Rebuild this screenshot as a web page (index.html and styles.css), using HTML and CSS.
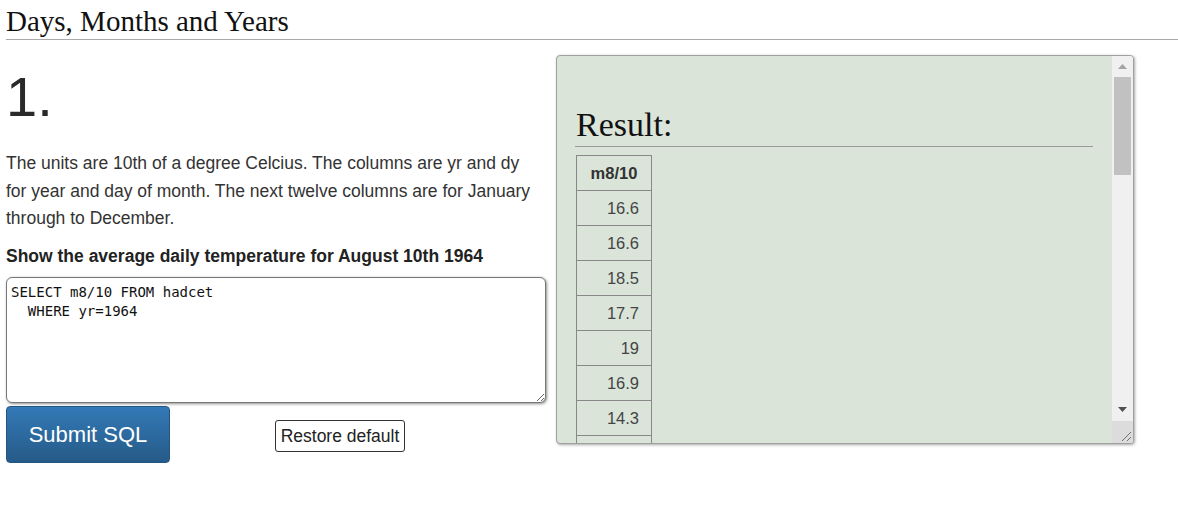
FILE: index.html
```html
<!DOCTYPE html>
<html lang="en">
<head>
<meta charset="utf-8">
<title>Days, Months and Years</title>
<link rel="stylesheet" href="styles.css">
</head>
<body>
<div class="page">
  <h1 class="title">Days, Months and Years</h1>
  <div class="main">
    <div class="question">
      <div class="qnum">1.</div>
      <p class="desc">The units are 10th of a degree Celcius. The columns are yr and dy for year and day of month. The next twelve columns are for January through to December.</p>
      <p class="task">Show the average daily temperature for August 10th 1964</p>
      <textarea class="sql" spellcheck="false">SELECT m8/10 FROM hadcet
  WHERE yr=1964</textarea>
      <div class="actions">
        <button class="btn-submit">Submit SQL</button>
        <button class="btn-restore">Restore default</button>
      </div>
    </div>
    <div class="panel">
      <div class="result-body">
        <h2 class="result-title">Result:</h2>
        <table class="result">
          <thead><tr><th>m8/10</th></tr></thead>
          <tbody>
            <tr><td>16.6</td></tr>
            <tr><td>16.6</td></tr>
            <tr><td>18.5</td></tr>
            <tr><td>17.7</td></tr>
            <tr><td>19</td></tr>
            <tr><td>16.9</td></tr>
            <tr><td>14.3</td></tr>
            <tr><td>&nbsp;</td></tr>
          </tbody>
        </table>
      </div>
      <div class="sb">
        <div class="sb-btn sb-up"><svg width="9" height="5" viewBox="0 0 9 5"><polygon points="0,5 9,5 4.5,0" fill="#a3a3a3"/></svg></div>
        <div class="sb-thumb"></div>
        <div class="sb-track"></div>
        <div class="sb-btn sb-down"><svg width="9" height="5" viewBox="0 0 9 5"><polygon points="0,0 9,0 4.5,5" fill="#505050"/></svg></div>
        <div class="sb-corner"><svg width="12" height="12" viewBox="0 0 12 12"><line x1="11" y1="2" x2="2" y2="11" stroke="#707070" stroke-width="1"/><line x1="11" y1="7" x2="7" y2="11" stroke="#707070" stroke-width="1"/></svg></div>
      </div>
    </div>
  </div>
</div>
</body>
</html>
```

FILE: styles.css
```css
html, body {
  margin: 0;
  padding: 0;
  background: #fff;
}

.page {
  padding: 0 0 0 6px;
}

.title {
  margin: 0;
  padding: 5px 0 2px 0;
  font-family: "Liberation Serif", "Times New Roman", serif;
  font-weight: normal;
  font-size: 29px;
  line-height: 32px;
  color: #111;
  border-bottom: 1px solid #aaa;
}

.main {
  display: flex;
  align-items: flex-start;
  gap: 10px;
}

.question {
  width: 540px;
  font-family: "Liberation Sans", Arial, sans-serif;
  color: #333;
}

.qnum {
  margin-top: 29px;
  font-size: 56px;
  line-height: 56px;
  height: 56px;
  color: #2a2a2a;
}

.desc {
  margin: 25px 0 0 0;
  max-width: 532px;
  font-size: 17.5px;
  line-height: 27.5px;
}

.task {
  margin: 10px 0 0 0;
  font-size: 17.5px;
  line-height: 27.5px;
  font-weight: bold;
  color: #222;
}

.sql {
  display: block;
  box-sizing: border-box;
  width: 540px;
  height: 126px;
  margin: 7px 0 0 0;
  padding: 5px 4px;
  border: 1px solid #777;
  border-radius: 6px;
  box-shadow: 1px 1px 3px rgba(0, 0, 0, 0.45);
  font-family: "DejaVu Sans Mono", "Liberation Mono", monospace;
  font-size: 14px;
  line-height: 19px;
  color: #111;
  background: #fff;
}

.actions {
  display: flex;
  align-items: center;
  margin-top: 3px;
}

.btn-submit {
  box-sizing: border-box;
  width: 164px;
  height: 57px;
  border: 1px solid #245580;
  border-radius: 4px;
  background: linear-gradient(to bottom, #337ab7 0%, #265a88 100%);
  color: #fff;
  font-family: "Liberation Sans", Arial, sans-serif;
  font-size: 22px;
  padding: 0;
}

.btn-restore {
  box-sizing: border-box;
  margin-left: 105px;
  margin-top: 3px;
  width: 130px;
  height: 32px;
  padding: 0;
  border: 1px solid #333;
  border-radius: 3px;
  background: #fff;
  color: #222;
  font-family: "Liberation Sans", Arial, sans-serif;
  font-size: 17.5px;
}

.panel {
  box-sizing: border-box;
  width: 578px;
  height: 389px;
  margin-top: 15px;
  display: flex;
  background: #dae4d9;
  border: 1px solid #a0a0a0;
  border-radius: 4px;
  box-shadow: 1px 1px 3px rgba(0, 0, 0, 0.35);
  overflow: hidden;
}

.result-body {
  flex: 1;
  overflow: hidden;
  padding: 0 19px 0 18px;
}

.result-title {
  margin: 49px 0 0 0;
  padding: 0 0 2px 1px;
  font-family: "Liberation Serif", "Times New Roman", serif;
  font-weight: normal;
  font-size: 34px;
  line-height: 39px;
  color: #111;
  border-bottom: 1px solid #999;
}

.result {
  margin-top: 8px;
  margin-left: 1px;
  border-collapse: collapse;
  font-family: "Liberation Sans", Arial, sans-serif;
  font-size: 16.5px;
  line-height: 18px;
}

.result th,
.result td {
  border: 1px solid #888;
  padding: 8px 12px;
  width: 50px;
}

.result th {
  text-align: center;
  font-weight: bold;
  color: #333;
}

.result td {
  text-align: right;
  color: #444;
}

.sb {
  width: 21px;
  display: flex;
  flex-direction: column;
  background: #f0f0f0;
}

.sb-btn {
  height: 20px;
  display: flex;
  align-items: center;
  justify-content: center;
}

.sb-down {
  align-items: flex-start;
  padding-top: 6px;
  box-sizing: border-box;
}

.sb-thumb {
  height: 98px;
  margin: 1px 2px 0 2px;
  background: #c1c1c1;
}

.sb-track {
  flex: 1;
}

.sb-corner {
  height: 21px;
  background: #dcdcdc;
  display: flex;
  align-items: flex-end;
  justify-content: flex-end;
  padding: 0 1px 1px 0;
}
```
